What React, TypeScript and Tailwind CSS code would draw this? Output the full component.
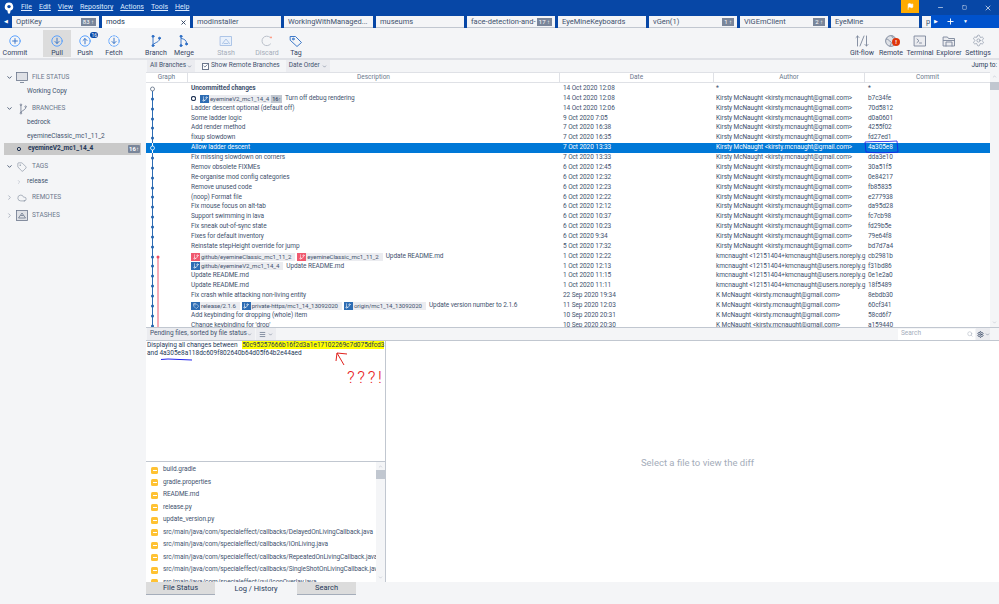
import { ChevronDown, ChevronRight, ChevronUp, Check, Cloud, GitBranch, Menu, Plus, Search, Settings, Tag, X, Flag, Minus, Square, Circle } from "lucide-react"
import type { ReactNode } from "react"

type Ref = { name: string; color: "blue" | "red"; tag?: boolean; badge?: string }
type Row = { text: string; date: string; author: string; commit: string; refs?: Ref[]; bold?: boolean; head?: boolean }

const kirsty = "Kirsty McNaught <kirsty.mcnaught@gmail.com>"
const kmc = "kmcnaught <12151404+kmcnaught@users.noreply.g"
const kn = "K McNaught <kirsty.mcnaught@gmail.com>"

const rows: Row[] = [
  { text: "Uncommitted changes", date: "14 Oct 2020 12:08", author: "*", commit: "*", bold: true },
  { text: "Turn off debug rendering", date: "14 Oct 2020 12:08", author: kirsty, commit: "b7c34fe", head: true, refs: [{ name: "eyemineV2_mc1_14_4", color: "blue", badge: "16↑" }] },
  { text: "Ladder descent optional (default off)", date: "14 Oct 2020 12:06", author: kirsty, commit: "70d5812" },
  { text: "Some ladder logic", date: "9 Oct 2020 7:05", author: kirsty, commit: "d0a0601" },
  { text: "Add render method", date: "7 Oct 2020 16:38", author: kirsty, commit: "4255f02" },
  { text: "fixup slowdown", date: "7 Oct 2020 16:35", author: kirsty, commit: "fd27ed1" },
  { text: "Allow ladder descent", date: "7 Oct 2020 13:33", author: kirsty, commit: "4a305e8" },
  { text: "Fix missing slowdown on corners", date: "7 Oct 2020 13:33", author: kirsty, commit: "dda3e10" },
  { text: "Remov obsolete FIXMEs", date: "6 Oct 2020 12:45", author: kirsty, commit: "30a51f5" },
  { text: "Re-organise mod config categories", date: "6 Oct 2020 12:32", author: kirsty, commit: "0e84217" },
  { text: "Remove unused code", date: "6 Oct 2020 12:23", author: kirsty, commit: "fb85835" },
  { text: "(noop) Format file", date: "6 Oct 2020 12:22", author: kirsty, commit: "e277938" },
  { text: "Fix mouse focus on alt-tab", date: "6 Oct 2020 12:12", author: kirsty, commit: "da95d28" },
  { text: "Support swimming in lava", date: "6 Oct 2020 10:37", author: kirsty, commit: "fc7cb98" },
  { text: "Fix sneak out-of-sync state", date: "6 Oct 2020 10:23", author: kirsty, commit: "fd29b5e" },
  { text: "Fixes for default inventory", date: "6 Oct 2020 9:34", author: kirsty, commit: "79e64f8" },
  { text: "Reinstate stepHeight override for jump", date: "5 Oct 2020 17:32", author: kirsty, commit: "bd7d7a4" },
  { text: "Update README.md", date: "1 Oct 2020 12:22", author: kmc, commit: "cb2981b", refs: [{ name: "github/eyemineClassic_mc1_11_2", color: "red" }, { name: "eyemineClassic_mc1_11_2", color: "red" }] },
  { text: "Update README.md", date: "1 Oct 2020 12:13", author: kmc, commit: "f31bd86", refs: [{ name: "github/eyemineV2_mc1_14_4", color: "blue" }] },
  { text: "Update README.md", date: "1 Oct 2020 11:15", author: kmc, commit: "0e1e2a0" },
  { text: "Update README.md", date: "1 Oct 2020 11:11", author: kmc, commit: "18f5489" },
  { text: "Fix crash while attacking non-living entity", date: "22 Sep 2020 19:34", author: kn, commit: "8ebdb30" },
  { text: "Update version number to 2.1.6", date: "11 Sep 2020 12:03", author: kn, commit: "60cf341", refs: [{ name: "release/2.1.6", color: "blue", tag: true }, { name: "private-https/mc1_14_13092020", color: "blue" }, { name: "origin/mc1_14_13092020", color: "blue" }] },
  { text: "Add keybinding for dropping (whole) item", date: "10 Sep 2020 20:31", author: kn, commit: "58cd6f7" },
  { text: "Change keybinding for 'drop'", date: "10 Sep 2020 20:30", author: kn, commit: "a159440" },
]

const files = [
  "build.gradle",
  "gradle.properties",
  "README.md",
  "release.py",
  "update_version.py",
  "src/main/java/com/specialeffect/callbacks/DelayedOnLivingCallback.java",
  "src/main/java/com/specialeffect/callbacks/IOnLiving.java",
  "src/main/java/com/specialeffect/callbacks/RepeatedOnLivingCallback.java",
  "src/main/java/com/specialeffect/callbacks/SingleShotOnLivingCallback.java",
  "src/main/java/com/specialeffect/gui/IconOverlay.java",
]

const tabs = [
  { name: "OptiKey", badge: "83 ↑", w: "w-[87px]" },
  { name: "mods", active: true, w: "w-[88px]" },
  { name: "modinstaller", w: "w-[88px]" },
  { name: "WorkingWithManaged...", w: "w-[89px]" },
  { name: "museums", w: "w-[88px]" },
  { name: "face-detection-and-", badge: "17 ↑", w: "w-[88px]" },
  { name: "EyeMineKeyboards", w: "w-[88px]" },
  { name: "vGen(1)", badge: "1 ↑", w: "w-[88px]" },
  { name: "ViGEmClient", badge: "2 ↑", w: "w-[88px]" },
  { name: "EyeMine", w: "w-[88px]" },
  { name: "p", w: "w-[9px]" },
]

// toolbar icons, all drawn on a 14x14 box
function Ico({ children, color }: { children: ReactNode; color: string }) {
  return (
    <svg width="14" height="14" viewBox="0 0 14 14" fill="none" stroke={color} strokeWidth="0.9" strokeLinecap="round" strokeLinejoin="round" className="shrink-0">
      {children}
    </svg>
  )
}

const sky = "#4c9aff"
const navy = "#2a6cc4"
const slate = "#7a869a"

const icons = {
  commit: <Ico color={sky}><circle cx="7" cy="7" r="5.2" /><path d="M7 4.6v4.8M4.6 7h4.8" stroke="#2a6cc4" /></Ico>,
  pull: <Ico color={sky}><circle cx="7" cy="7" r="5.2" /><path d="M7 4.2v5M5 7.5l2 2 2-2" stroke="#2a6cc4" /></Ico>,
  push: <Ico color={sky}><circle cx="7" cy="7" r="5.2" /><path d="M7 9.8v-5M5 6.5l2-2 2 2" stroke="#2a6cc4" /></Ico>,
  fetch: <Ico color={sky}><circle cx="7" cy="7" r="5.2" strokeDasharray="2 1.3" /><path d="M7 4.2v5M5 7.5l2 2 2-2" stroke="#2a6cc4" /></Ico>,
  branch: <Ico color={navy}><path d="M4 3v7" /><path d="M10.5 5C10.5 8 7 8 4 10.5" /><circle cx="4" cy="2.3" r="1" fill={navy} /><circle cx="4" cy="11.6" r="1" fill={navy} /><circle cx="10.5" cy="4.2" r="1" fill={navy} /></Ico>,
  merge: <Ico color={navy}><path d="M4 3v9" /><path d="M4.5 4.5C7 5 9.5 6 9.5 9" /><circle cx="4" cy="2.3" r="1" fill={navy} /><circle cx="9.5" cy="10" r="1" fill={navy} /><circle cx="4" cy="11.6" r="1" fill={navy} /></Ico>,
  stash: <Ico color="#a5c0e4"><rect x="1.5" y="2.5" width="11" height="9" fill="#eaf1fb" /><path d="M3.5 9.5l3.5-4.5 3.5 4.5M5 9.5h4" /></Ico>,
  discard: <Ico color="#b3bac5"><path d="M10.5 10a4.8 4.8 0 1 1-.6-6.8" /><circle cx="11" cy="3.4" r="0.9" fill="#ff8f73" stroke="none" /></Ico>,
  tag: <Ico color={navy}><path d="M1.5 2.5h5l6 6-4.5 4-6.5-6Z" /><circle cx="4.3" cy="5" r="0.9" /></Ico>,
  gitflow: <Ico color={slate}><path d="M2.5 12V2M1 3.5l1.5-1.5L4 3.5M11.5 2v10M10 10.5l1.5 1.5 1.5-1.5M5 12l4-10" /></Ico>,
  remote: <Ico color={slate}><circle cx="7" cy="7" r="5.4" fill="#dfe1e6" /><path d="M2.5 5c2 0 2.5 2 4 2.5s.5 3-.5 4.5M8 2c-.5 2 2 2.5 4 2.5" /></Ico>,
  terminal: <Ico color={slate}><rect x="1.5" y="2" width="11" height="10" fill="#ebecf0" /><path d="M4 5l2 1.8L4 8.6M6.5 9h2" /></Ico>,
  explorer: <Ico color={slate}><path d="M1.5 3h4l1 1.5h6V12h-11Z" fill="#ebecf0" /><path d="M4 12V8h6v4M1.5 6.5h11" /></Ico>,
  settings: <Settings className="h-[13px] w-[13px] text-[#7a869a]" strokeWidth={1.1} />,
}

function ToolButton({ icon, label, active, disabled, className, children }: { icon: ReactNode; label: string; active?: boolean; disabled?: boolean; className?: string; children?: ReactNode }) {
  return (
    <div className={`relative flex h-[27px] w-[28px] flex-col items-center gap-[1px] pt-[4px] ${active ? "bg-[#dcdcdc]" : ""} ${className ?? ""}`}>
      {icon}
      <span className={`whitespace-nowrap text-[7px] leading-[8px] ${disabled ? "text-[#a5adba]" : "text-[#344563]"}`}>{label}</span>
      {children}
    </div>
  )
}

function SideHead({ icon, label, open }: { icon: ReactNode; label: string; open?: boolean }) {
  return (
    <div className="flex h-[13px] items-center gap-[3px] pl-[6px]">
      {open ? <ChevronDown className="h-[7px] w-[7px] text-[#42526e]" strokeWidth={3} /> : <ChevronRight className="h-[7px] w-[7px] text-[#a5adba]" strokeWidth={3} />}
      <span className="flex w-[12px] justify-center text-[#6b778c]">{icon}</span>
      <span className="ml-[1px] text-[6.5px] text-[#6b778c]">{label}</span>
    </div>
  )
}

function Lane({ index }: { index: number }) {
  const hollow = index === 0 || index === 6
  const red = index >= 17
  const cy = 5
  return (
    <svg width="42" height="10" className="shrink-0">
      {red && <line x1="12" x2="12" y1={index === 17 ? 5 : 0} y2="10" stroke="#f0596f" strokeWidth="1" />}
      <line x1="6.5" x2="6.5" y1={index === 0 ? 5 : 0} y2="10" stroke={index === 6 ? "#ffffff" : "#2e6db4"} strokeWidth="1" />
      {hollow ? (
        <circle cx="6.5" cy={cy} r="2" fill={index === 6 ? "#0078d7" : "#fff"} stroke={index === 6 ? "#fff" : "#5a6b82"} strokeWidth="0.8" />
      ) : (
        <circle cx="6.5" cy={cy} r="1.5" fill="#2463ad" />
      )}
      {index === 17 && <circle cx="12" cy={cy} r="1.5" fill="#ee4a62" />}
    </svg>
  )
}

function RefChip({ item }: { item: Ref }) {
  return (
    <span className={`mr-[2px] flex h-[8px] shrink-0 items-center bg-[#ebecf0] ${item.badge ? "" : "pr-[4px]"}`}>
      <span className={`mr-[1px] flex h-[8px] w-[9px] items-center justify-center ${item.color === "red" ? "bg-[#f0596f]" : "bg-[#2e6db4]"}`}>
        {item.tag ? <Tag className="h-[6px] w-[6px] text-white" /> : <GitBranch className="h-[6px] w-[6px] text-white" />}
      </span>
      <span className="whitespace-nowrap text-[6.1px] leading-[8px]">{item.name}</span>
      {item.badge && <span className="ml-[2px] flex h-[8px] items-center bg-[#c1c7d0] px-[1px] text-[5.5px] font-semibold">{item.badge}</span>}
    </span>
  )
}

function LogRow({ row, index }: { row: Row; index: number }) {
  const selected = index === 6
  return (
    <div className={`flex h-[9.87px] items-center overflow-hidden whitespace-nowrap text-[6.5px] tracking-[-0.07px] ${selected ? "bg-[#0078d7] text-white" : "text-[#42526e]"}`}>
      <Lane index={index} />
      <div className="flex w-[372px] shrink-0 items-center pl-[3px]">
        {row.head && <Circle className="mr-[4px] h-[5px] w-[5px] text-[#253858]" strokeWidth={5} />}
        {row.refs?.map((r) => <RefChip key={r.name} item={r} />)}
        <span className={`${row.refs ? "ml-[1px]" : ""} ${row.bold ? "font-bold" : ""}`}>{row.text}</span>
      </div>
      <div className="w-[154px] shrink-0 pl-[3px]">{row.date}</div>
      <div className="w-[151px] shrink-0 pl-[2px]">{row.author}</div>
      <div className="pl-[3px]">{row.commit}</div>
    </div>
  )
}

export default function App() {
  return (
    <div className="relative flex h-[604px] w-[999px] flex-col overflow-hidden bg-[#f4f5f7] text-[#42526e]" style={{ fontFamily: 'Roboto, sans-serif' }}>
      {/* Title bar */}
      <div className="flex h-[15px] shrink-0 items-center bg-[#0747a6] text-[7px] text-[#deebff]">
        <svg width="10" height="12" viewBox="0 0 10 12" className="ml-[4px]">
          <path d="M5 0.5a4.2 4.2 0 0 1 1.6 8.1L6 11.5H4L3.4 8.6A4.2 4.2 0 0 1 5 0.5Z" fill="#fff" />
          <circle cx="5" cy="4.6" r="1.7" fill="#0747a6" />
        </svg>
        <div className="ml-[7px] flex gap-[7px]">
          {["File", "Edit", "View", "Repository", "Actions", "Tools", "Help"].map((m) => (
            <span key={m} className="underline decoration-[0.5px] underline-offset-1">{m}</span>
          ))}
        </div>
        <div className="ml-auto flex h-full items-start">
          <div className="flex h-[13px] w-[18px] items-center justify-center bg-[#ffab00]">
            <Flag className="h-[7px] w-[7px] fill-white text-white" />
          </div>
          <div className="flex h-full w-[80px] items-center justify-end gap-[17.5px] pr-[7px] text-white">
            <Minus className="h-[7px] w-[7px]" />
            <Square className="h-[5px] w-[5px]" />
            <X className="h-[8px] w-[8px]" />
          </div>
        </div>
      </div>

      {/* Repo tabs */}
      <div className="flex h-[13px] shrink-0 items-end bg-[#0747a6]">
        <div className="flex h-full w-[12px] items-center justify-center text-[5px] text-white">◀</div>
        <div className="flex h-[12px] gap-[3px] overflow-hidden">
          {tabs.map((t) => (
            <div key={t.name} className={`flex h-full shrink-0 items-center overflow-hidden pl-[4px] text-[7.5px] ${t.w} ${t.active ? "bg-white text-[#253858]" : "border-b border-[#c1c7d0] bg-[#f4f5f7] text-[#42526e]"}`}>
              <span className="whitespace-nowrap">{t.name}</span>
              {t.badge && <span className="ml-auto mr-[3px] bg-[#7a869a] px-[2px] text-[6px] leading-[8px] text-white">{t.badge}</span>}
              {t.active && <X className="ml-auto mr-[3px] h-[7px] w-[7px] text-[#253858]" strokeWidth={3} />}
            </div>
          ))}
        </div>
        <div className="ml-auto flex h-full w-[68px] items-center gap-[8px] bg-[#0052cc] pl-[3px] text-white">
          <span className="text-[5px]">▶</span>
          <Plus className="h-[9px] w-[9px]" strokeWidth={2.5} />
          <span className="text-[5px]">▼</span>
        </div>
      </div>

      {/* Toolbar */}
      <div className="flex h-[32px] shrink-0 items-center border-b-2 border-[#dfe1e6] px-[1px]">
        <ToolButton icon={icons.commit} label="Commit" />
        <ToolButton icon={icons.pull} label="Pull" active className="ml-[14px]" />
        <ToolButton icon={icons.push} label="Push">
          <span className="absolute right-[1px] top-[2px] rounded-[3px] bg-[#0747a6] px-[1px] text-[5px] leading-[6px] text-white">16</span>
        </ToolButton>
        <ToolButton icon={icons.fetch} label="Fetch" className="ml-[1px]" />
        <ToolButton icon={icons.branch} label="Branch" className="ml-[14px]" />
        <ToolButton icon={icons.merge} label="Merge" />
        <ToolButton icon={icons.stash} label="Stash" disabled className="ml-[14px]" />
        <ToolButton icon={icons.discard} label="Discard" disabled className="ml-[13px]" />
        <ToolButton icon={icons.tag} label="Tag" className="ml-[1px]" />
        <div className="ml-auto mr-[6px] flex gap-[1px]">
          <ToolButton icon={icons.gitflow} label="Git-flow" />
          <ToolButton icon={icons.remote} label="Remote">
            <span className="absolute left-[15px] top-[8px] flex h-[8px] w-[8px] items-center justify-center rounded-full bg-[#de350b] text-[6px] font-bold leading-none text-white">!</span>
          </ToolButton>
          <ToolButton icon={icons.terminal} label="Terminal" />
          <ToolButton icon={icons.explorer} label="Explorer" />
          <ToolButton icon={<span className="flex h-[14px] items-center">{icons.settings}</span>} label="Settings" />
        </div>
      </div>

      <div className="flex min-h-0 flex-1">
        {/* Sidebar */}
        <aside className="flex w-[146px] shrink-0 flex-col pt-[11px] text-[6.5px]">
          <SideHead
            open
            label="FILE STATUS"
            icon={
              <svg width="12" height="11" viewBox="0 0 12 11" fill="none" stroke="currentColor" strokeWidth="0.8">
                <rect x="0.5" y="0.5" width="11" height="8" fill="#dfe1e6" />
                <path d="M4 10.5h4" />
              </svg>
            }
          />
          <div className="mb-[2px] flex h-[16px] items-center pl-[27px]">Working Copy</div>
          <SideHead
            open
            label="BRANCHES"
            icon={
              <svg width="11" height="12" viewBox="0 0 14 14" fill="none" stroke="currentColor" strokeWidth="1">
                <path d="M5 2v10M11 5C11 8 8 8 5 11" />
                <circle cx="5" cy="1.6" r="1" />
                <circle cx="5" cy="12.4" r="1" />
                <circle cx="11" cy="4" r="1" />
              </svg>
            }
          />
          <div className="flex h-[16px] items-center pl-[27px]">bedrock</div>
          <div className="flex h-[12px] items-center pl-[27px]">eyemineClassic_mc1_11_2</div>
          <div className="ml-[4px] mr-[5px] flex h-[12px] items-center bg-[#c9c9c9] pl-[13px] font-bold text-[#253858]">
            <Circle className="mr-[7px] h-[4px] w-[4px]" strokeWidth={6} />
            eyemineV2_mc1_14_4
            <span className="ml-auto mr-[1px] rounded-[1px] bg-[#7a869a] px-[1px] text-[6px] leading-[8px] text-white">16↑</span>
          </div>
          <div className="mt-[5px]">
            <SideHead open icon={<Tag className="h-[10px] w-[10px]" strokeWidth={1.25} />} label="TAGS" />
          </div>
          <div className="flex h-[18px] items-center pl-[16px]">
            <ChevronRight className="mr-[5px] h-[6px] w-[6px] text-[#a5adba]" />
            release
          </div>
          <SideHead icon={<Cloud className="h-[10px] w-[10px]" strokeWidth={1.25} />} label="REMOTES" />
          <div className="mt-[5px]">
            <SideHead
              label="STASHES"
              icon={
                <svg width="12" height="11" viewBox="0 0 12 11" fill="none" stroke="currentColor" strokeWidth="0.8">
                  <rect x="0.5" y="0.5" width="11" height="10" fill="#dfe1e6" />
                  <path d="M2.5 8l3.5-5 3.5 5ZM4.5 5.5h3" />
                </svg>
              }
            />
          </div>
        </aside>

        <main className="flex min-w-0 flex-1 flex-col">
          {/* Filter bar */}
          <div className="flex h-[12px] shrink-0 items-center whitespace-nowrap text-[6.5px]">
            <div className="ml-[1px] flex h-full w-[48px] items-center justify-between bg-[#ebecf0] px-[3px]">All Branches <ChevronDown className="h-[5px] w-[5px]" /></div>
            <div className="ml-[7px] flex items-center gap-[2px]">
              <span className="flex h-[7px] w-[7px] items-center justify-center border border-[#6b778c] bg-white"><Check className="h-[6px] w-[6px] text-[#253858]" strokeWidth={3} /></span>
              Show Remote Branches
            </div>
            <div className="ml-[6px] flex h-full w-[44px] items-center justify-between bg-[#ebecf0] px-[3px]">Date Order <ChevronDown className="h-[5px] w-[5px]" /></div>
            <span className="ml-auto mr-[2px] text-[#253858]">Jump to:</span>
          </div>

          {/* Commit log */}
          <div className="flex h-[255px] shrink-0 bg-white">
            <div className="min-w-0 flex-1">
              <div className="flex h-[11px] items-center border-y border-[#dfe1e6] bg-white text-center text-[6.5px] text-[#6b778c]">
                <div className="w-[42px] border-r border-[#dfe1e6]">Graph</div>
                <div className="w-[372px] border-r border-[#dfe1e6]">Description</div>
                <div className="w-[154px] border-r border-[#dfe1e6]">Date</div>
                <div className="w-[151px] border-r border-[#dfe1e6]">Author</div>
                <div className="flex-1">Commit</div>
              </div>
              <div className="h-[244px] overflow-hidden pt-[1px]">
                {rows.map((r, i) => <LogRow key={r.commit} row={r} index={i} />)}
              </div>
            </div>
            <div className="flex w-[9px] shrink-0 flex-col items-center justify-between bg-[#f4f5f7] py-[2px]">
              <div className="flex flex-col items-center">
                <ChevronUp className="h-[5px] w-[5px] text-[#a5adba]" />
                <div className="mt-[3px] h-[8px] w-[9px] bg-[#c1c7d0]" />
              </div>
              <ChevronDown className="h-[5px] w-[5px] text-[#a5adba]" />
            </div>
          </div>

          {/* Files header */}
          <div className="flex h-[14px] shrink-0 items-center whitespace-nowrap border-y border-[#c1c7d0] text-[6.5px]">
            <div className="ml-[1px] flex h-[12px] w-[108px] items-center justify-between bg-[#ebecf0] px-[3px]">Pending files, sorted by file status <ChevronDown className="h-[5px] w-[5px]" /></div>
            <div className="ml-[1px] flex h-[12px] w-[20px] items-center justify-center gap-[2px] bg-[#ebecf0]"><Menu className="h-[7px] w-[7px]" /><ChevronDown className="h-[5px] w-[5px]" /></div>
            <div className="ml-auto flex h-[11px] w-[77px] items-center justify-between bg-white pl-[3px] pr-[2px] text-[#a5adba]">Search <Search className="h-[6px] w-[6px]" /></div>
            <div className="ml-[1px] mr-[9px] flex h-[12px] w-[14px] items-center justify-center gap-[1px] bg-[#ebecf0]"><Settings className="h-[7px] w-[7px] text-[#42526e]" strokeWidth={3} /><ChevronDown className="h-[5px] w-[5px]" /></div>
          </div>

          {/* Details + files + diff */}
          <div className="flex h-[241px] shrink-0 bg-white">
            <div className="flex w-[240px] shrink-0 flex-col border-r border-[#c1c7d0]">
              <div className="h-[121px] shrink-0 border-b border-[#c1c7d0] px-[1px] pt-[1px] text-[6.5px] leading-[7.5px] text-[#253858]">
                <p className="whitespace-nowrap">Displaying all changes between <span className="ml-[3px] bg-[#ffff00]">50c95257666b16f2d3a1e17102269c7d075dfcd3</span></p>
                <p className="whitespace-nowrap">and 4a305e8a118dc609f802640b64d05f64b2e44aed</p>
              </div>
              <div className="flex min-h-0 flex-1">
                <div className="min-w-0 flex-1 overflow-hidden pl-[5px] pt-[2px]">
                  {files.map((f) => (
                    <div key={f} className="flex h-[12.5px] items-center whitespace-nowrap text-[6.5px] tracking-[-0.07px]">
                      <span className="mr-[5px] flex h-[7px] w-[7px] shrink-0 items-center justify-center rounded-[1.5px] bg-[#ffc233]">
                        <span className="h-[1px] w-[4px] bg-white" />
                      </span>
                      {f}
                    </div>
                  ))}
                </div>
                <div className="flex w-[9px] shrink-0 flex-col items-center justify-between bg-[#f4f5f7] py-[2px]">
                  <div className="flex flex-col items-center">
                    <ChevronUp className="h-[5px] w-[5px] text-[#a5adba]" />
                    <div className="mt-[1px] h-[9px] w-[9px] bg-[#c1c7d0]" />
                  </div>
                  <ChevronDown className="h-[5px] w-[5px] text-[#a5adba]" />
                </div>
              </div>
            </div>
            <div className="flex flex-1 items-center justify-center pl-[10px] pt-[3px] text-[9.5px] text-[#a5adba]">Select a file to view the diff</div>
          </div>

          {/* Bottom tabs */}
          <div className="flex h-[13px] shrink-0 gap-[2px] text-[7.5px] text-[#253858]">
            <div className="flex w-[69px] items-center justify-center border-b border-[#a5adba] bg-[#dcdcdc]">File Status</div>
            <div className="flex w-[78px] items-center justify-center bg-[#f4f5f7]">Log / History</div>
            <div className="flex w-[59px] items-center justify-center border-b border-[#a5adba] bg-[#dcdcdc]">Search</div>
          </div>
        </main>
      </div>

      {/* Hand-drawn annotations on the screenshot */}
      <svg width="999" height="604" className="pointer-events-none absolute inset-0">
        <path d="M865 142 C875 141 887 142 897 141 L898 152 C888 153 874 153 866 152 Z" fill="none" stroke="#1a1ae6" strokeWidth="0.8" />
        <path d="M161 359.5 L168 359 L192 360" fill="none" stroke="#2222ee" strokeWidth="1" />
        <path d="M344 365 L337 353 M337 353 L336 361 M337 353 L347 354" fill="none" stroke="#e0201c" strokeWidth="1" />
      </svg>
      <span className="pointer-events-none absolute left-[347px] top-[366px] text-[17px] font-light leading-[22px] tracking-[2.6px] text-[#e8201c]">???!</span>
    </div>
  )
}
